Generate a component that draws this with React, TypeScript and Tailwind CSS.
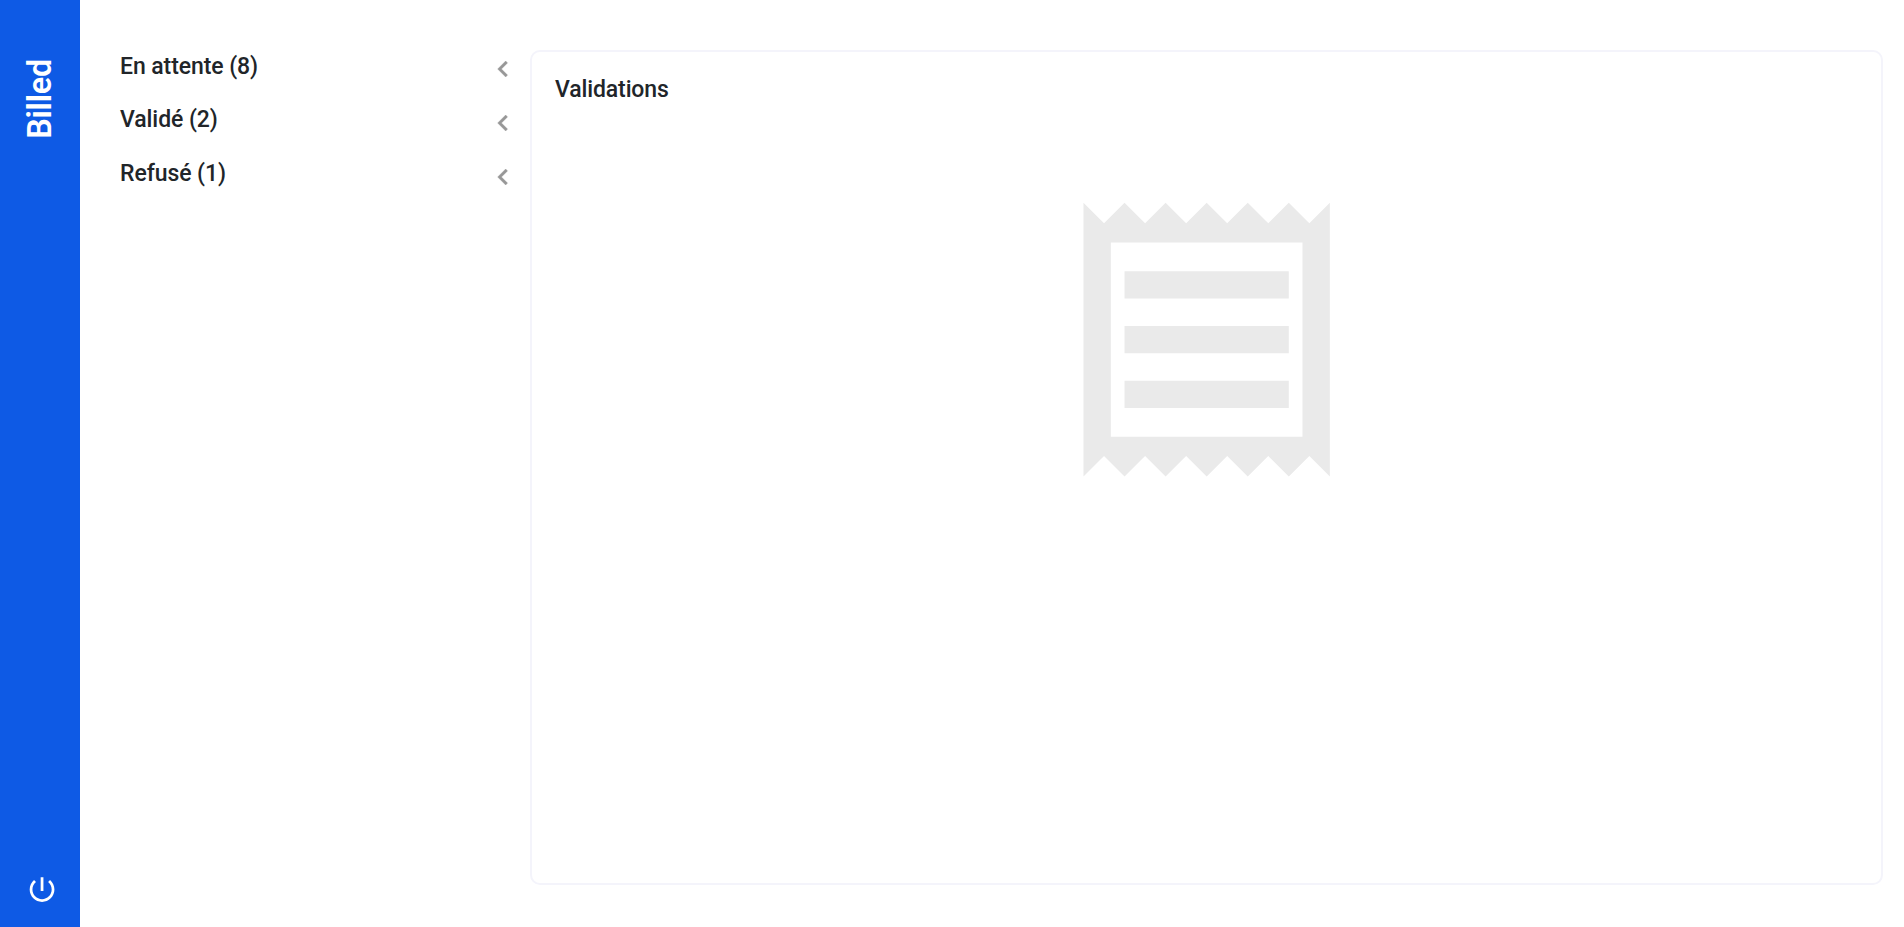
const groups = [
  { label: "En attente", count: 8 },
  { label: "Validé", count: 2 },
  { label: "Refusé", count: 1 },
];

function Chevron() {
  return (
    <svg className="mt-[0.4px] size-8 shrink-0" viewBox="0 0 24 24" fill="#979797" stroke="#979797" strokeWidth="0.3">
      <path d="M15.41 7.41 14 6l-6 6 6 6 1.41-1.41L10.83 12z" />
    </svg>
  );
}

function PowerIcon() {
  return (
    <svg className="size-[33px]" viewBox="-0.4 0 24 24" fill="#fff">
      <path d="M13 3h-2v10h2V3zm4.83 2.17-1.42 1.42C17.99 7.86 19 9.81 19 12c0 3.87-3.13 7-7 7s-7-3.13-7-7c0-2.19 1.01-4.14 2.58-5.42L6.17 5.17C4.23 6.82 3 9.26 3 12c0 4.97 4.03 9 9 9s9-4.03 9-9c0-2.74-1.23-5.18-3.17-6.83z" />
    </svg>
  );
}

function ReceiptIcon() {
  return (
    <svg className="size-[328.5px]" viewBox="-0.03 -0.03 24 24" fill="#eaeaea">
      <path d="M19.5 3.5 18 2l-1.5 1.5L15 2l-1.5 1.5L12 2l-1.5 1.5L9 2 7.5 3.5 6 2 4.5 3.5 3 2v20l1.5-1.5L6 22l1.5-1.5L9 22l1.5-1.5L12 22l1.5-1.5L15 22l1.5-1.5L18 22l1.5-1.5L21 22V2l-1.5 1.5zM19 19.09H5V4.91h14v14.18zM6 15h12v2H6zm0-4h12v2H6zm0-4h12v2H6z" />
    </svg>
  );
}

export default function App() {
  return (
    <div className="flex h-screen overflow-hidden bg-white font-['Roboto',sans-serif] text-[#212529]">
      <aside className="flex w-20 shrink-0 flex-col items-center justify-between bg-[#0e5ae5] pt-[59px] pb-[21px]">
        <div className="flex size-20 items-center justify-center">
          <h1 className="-rotate-90 text-[32.4px] leading-[38px] font-semibold tracking-[-0.3px] text-white">Billed</h1>
        </div>
        <button type="button" aria-label="Déconnexion" className="ml-[3px]">
          <PowerIcon />
        </button>
      </aside>
      <section className="flex w-[450px] shrink-0 flex-col gap-[21.4px] pt-[52.6px] pr-[11px] pl-10">
        {groups.map((g) => (
          <div key={g.label} className="flex h-[32.4px] items-start justify-between">
            <h3 className="text-[23px] leading-[27px] font-medium tracking-[-0.08px]">
              {g.label} ({g.count})
            </h3>
            <Chevron />
          </div>
        ))}
      </section>
      <main className="mt-[50px] mr-[21px] flex h-[835px] grow flex-col rounded-[10px] border-2 border-[#f4f4fb] pt-[23px]">
        <h3 className="pl-[23px] text-[23px] leading-[29px] font-medium tracking-[-0.12px]">Validations</h3>
        <div className="mt-[71px] flex justify-center">
          <ReceiptIcon />
        </div>
      </main>
    </div>
  );
}
